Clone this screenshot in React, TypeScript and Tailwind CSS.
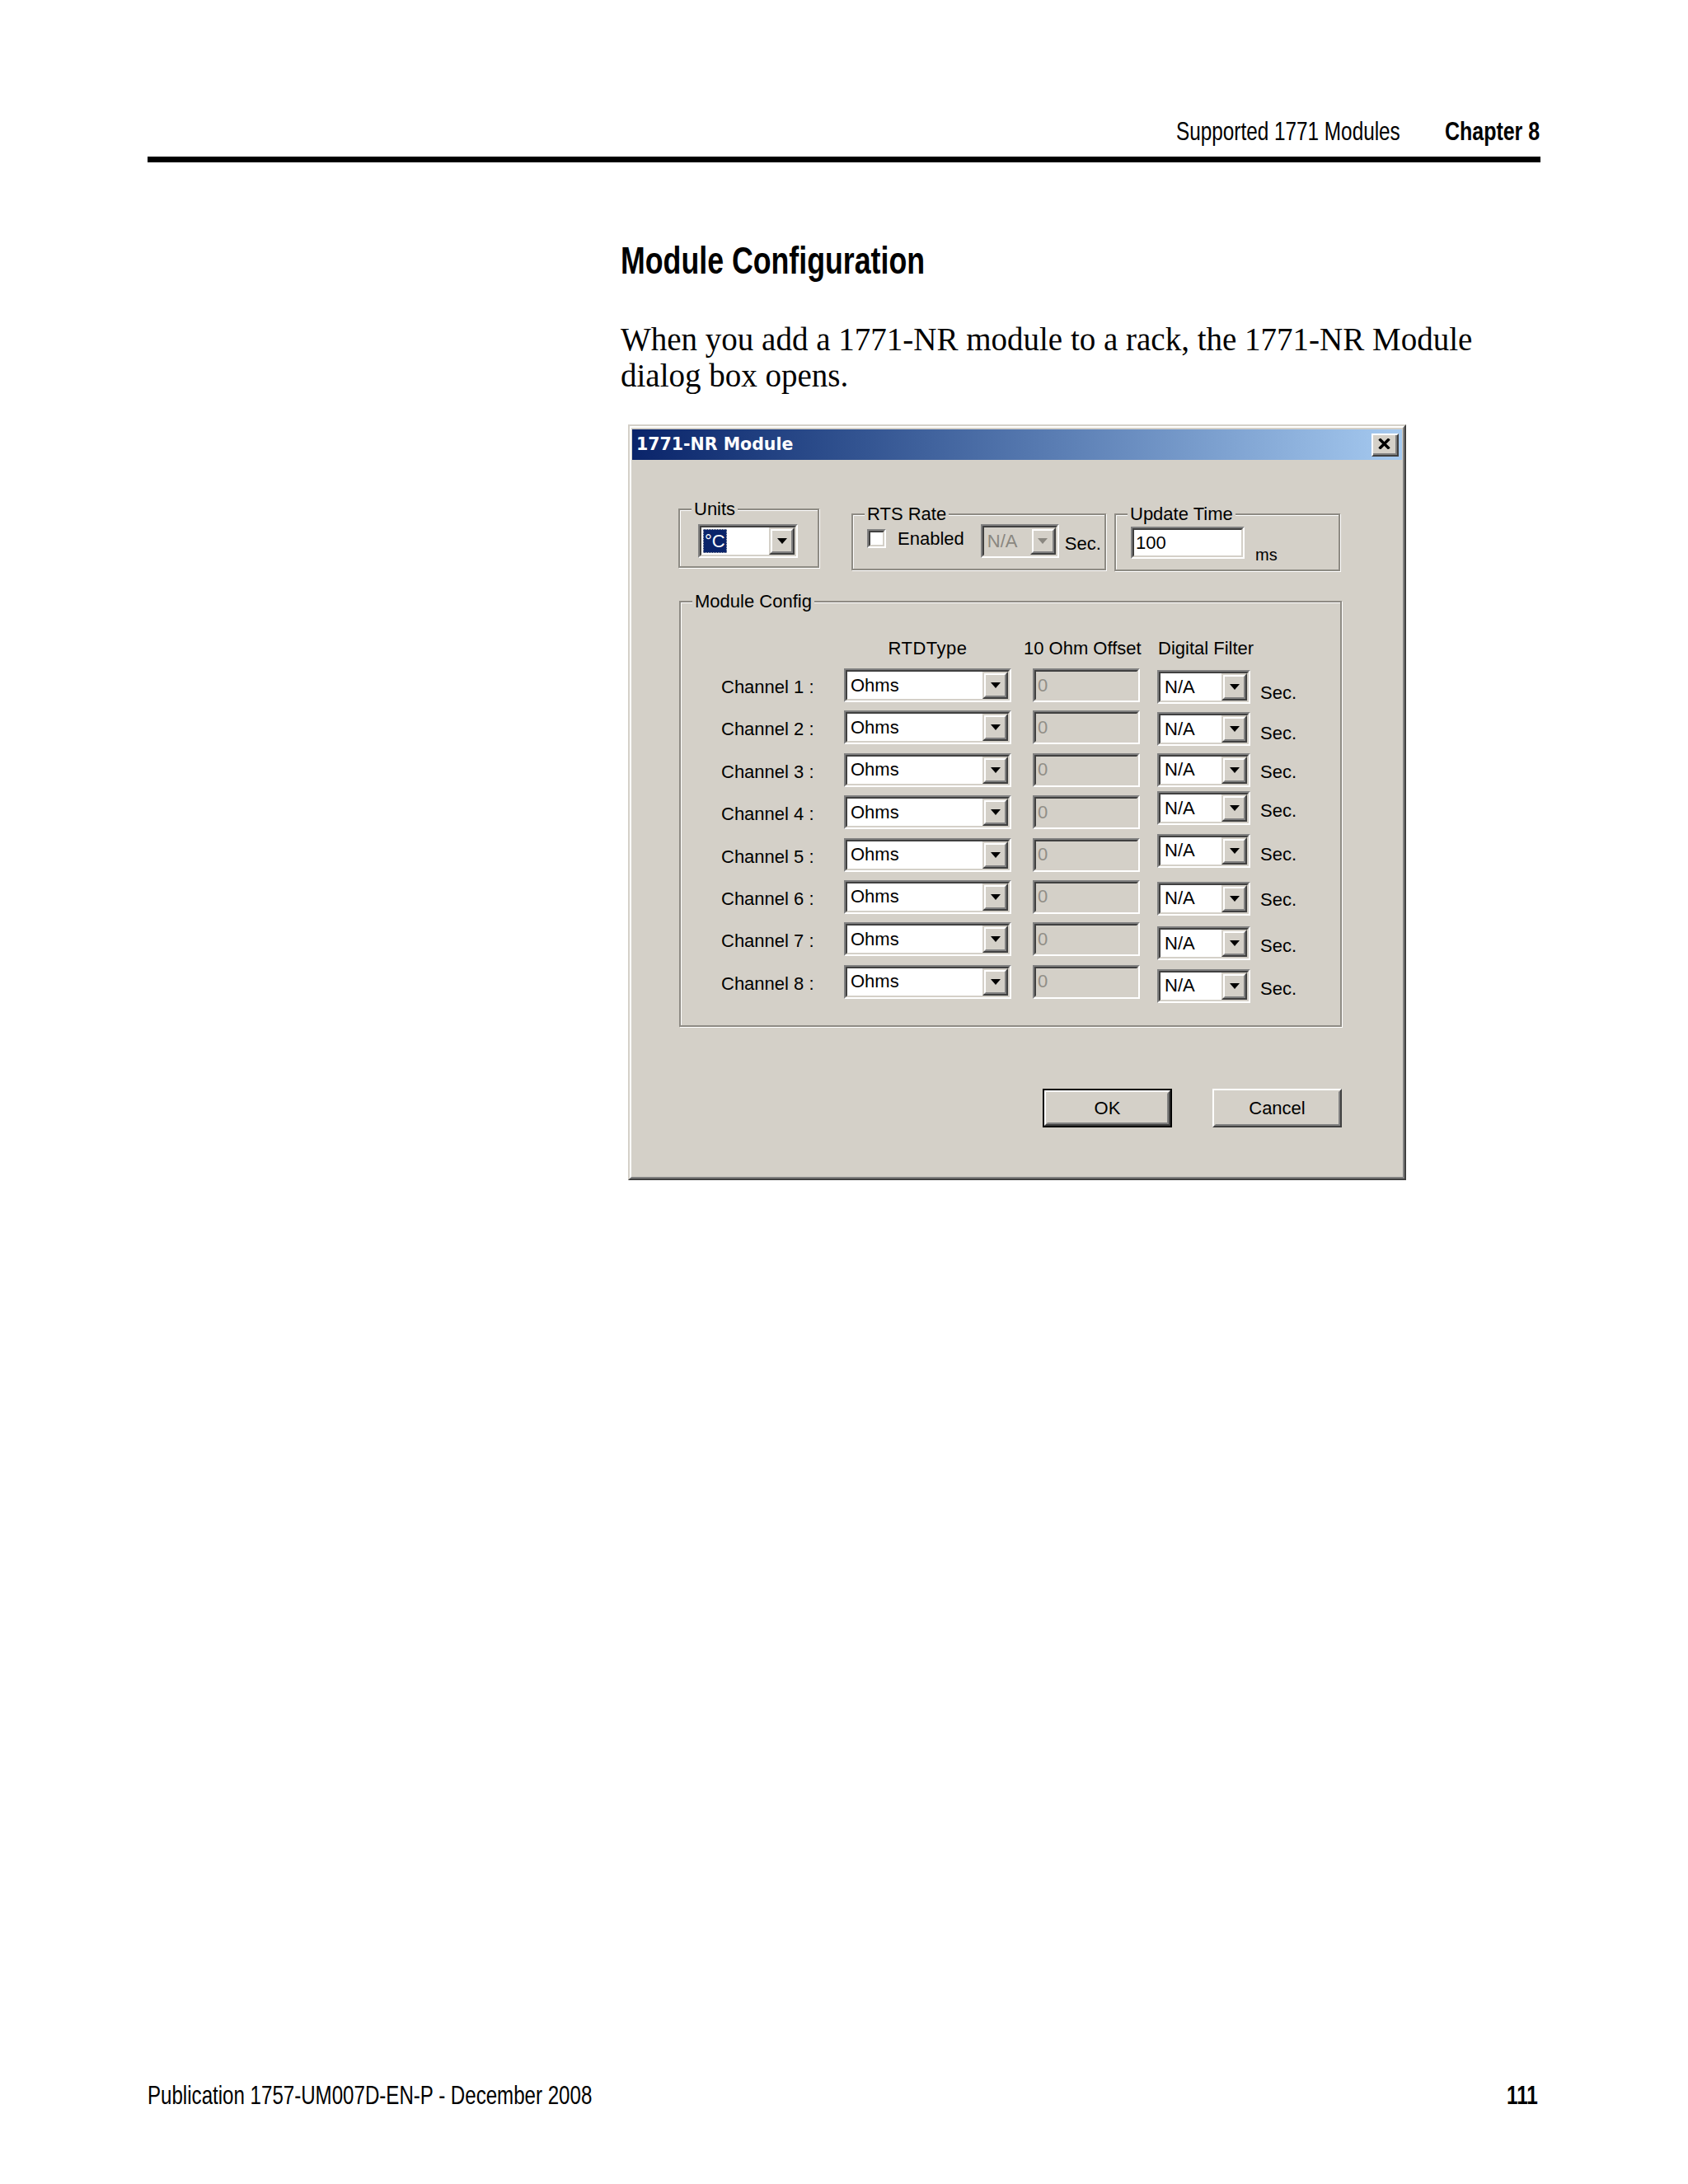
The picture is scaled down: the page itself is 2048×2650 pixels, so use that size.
import clsx from "clsx";
import type { ReactNode } from "react";

// no condensed family installed: Arial metrics squeezed to Helvetica Condensed width
const cond = "font-['Liberation_Sans',Arial,sans-serif]";

// per-row nudges, the original screenshot is not perfectly regular
const FILTER_MT = ["mt-[2px]", "mt-[2px]", "mt-0", "-mt-[5px]", "-mt-[5px]", "mt-[2px]", "mt-[5px]", "mt-[5px]"];
const SEC_MT = ["mt-[17px]", "mt-[15px]", "mt-[10px]", "mt-[6px]", "mt-[7px]", "mt-[11px]", "mt-[16px]", "mt-[16px]"];

function Squeezed({ width, className, squeeze = "scale-x-[0.76]", children }: {
  width: string; className?: string; squeeze?: string; children: ReactNode;
}) {
  return (
    <div className={clsx(width, className)}>
      <span className={clsx("inline-block origin-left whitespace-nowrap", squeeze)}>{children}</span>
    </div>
  );
}

function Sunken({ className, inner, children }: { className?: string; inner?: string; children?: ReactNode }) {
  return (
    <div className={clsx("flex border-2 border-t-[#808080] border-l-[#808080] border-b-white border-r-white", className)}>
      <div className={clsx("flex flex-1 min-w-0 border-2 border-t-[#404040] border-l-[#404040] border-b-[#d4d0c8] border-r-[#d4d0c8]", inner)}>
        {children}
      </div>
    </div>
  );
}

function Arrow({ disabled }: { disabled?: boolean }) {
  return (
    <svg width="12" height="7" viewBox="0 0 12 7">
      <polygon points="0,0 12,0 6,7" fill={disabled ? "#8a8780" : "#000"} />
    </svg>
  );
}

function DropButton({ disabled }: { disabled?: boolean }) {
  return (
    <div className="w-[31px] h-full border-2 border-t-[#d4d0c8] border-l-[#d4d0c8] border-b-[#404040] border-r-[#404040]">
      <div className="h-full flex items-center justify-center bg-[#d4d0c8] border-2 border-t-white border-l-white border-b-[#808080] border-r-[#808080]">
        <Arrow disabled={disabled} />
      </div>
    </div>
  );
}

function Combo({ width, value, disabled, className, textPad = "pl-[4px]" }: {
  width: string; value: ReactNode; disabled?: boolean; className?: string; textPad?: string;
}) {
  return (
    <Sunken className={clsx(width, "h-[41px]", className)} inner={disabled ? "bg-[#d4d0c8]" : "bg-white"}>
      <div className={clsx("flex-1 flex items-center leading-[26px]", textPad, disabled && "text-[#8a8780]")}>{value}</div>
      <DropButton disabled={disabled} />
    </Sunken>
  );
}

function GroupBox({ label, className, children }: { label: string; className?: string; children?: ReactNode }) {
  return (
    <div className={clsx("relative border-2 border-[#8e8b84] shadow-[inset_1px_1px_0_#fff,1px_1px_0_#fff]", className)}>
      <span className="absolute left-[14px] -top-[14px] px-[3px] bg-[#d4d0c8] leading-[26px] whitespace-nowrap">{label}</span>
      {children}
    </div>
  );
}

function Button({ label, isDefault }: { label: string; isDefault?: boolean }) {
  return (
    <div className={clsx("w-[157px] h-[47px]", isDefault && "border-2 border-black")}>
      <div className="h-full border-2 border-t-white border-l-white border-b-[#404040] border-r-[#404040]">
        <div className="h-full flex items-center justify-center border-2 border-t-[#d4d0c8] border-l-[#d4d0c8] border-b-[#808080] border-r-[#808080]">
          {label}
        </div>
      </div>
    </div>
  );
}

function NrDialog() {
  return (
    <div className="mt-[37px] ml-[9px] w-[944px] h-[917px] bg-[#d4d0c8] border-2 border-t-[#d4d0c8] border-l-[#d4d0c8] border-b-[#404040] border-r-[#404040]">
      <div className="h-full flex flex-col px-[1px] pt-[2px] border-2 border-t-white border-l-white border-b-[#808080] border-r-[#808080] font-['Liberation_Sans',Arial,sans-serif] text-[22px] text-black">
        {/* title bar */}
        <div className="h-[37px] flex items-center justify-between bg-linear-to-r from-[#0a246a] to-[#a6caf0] pl-[5px] pr-[4px]">
          <span className="font-['DejaVu_Sans',sans-serif] font-bold text-[20.5px] text-white leading-none">1771-NR Module</span>
          <div className="w-[33px] h-[28px] border-2 border-t-white border-l-white border-b-[#404040] border-r-[#404040] bg-[#d4d0c8]">
            <div className="h-full flex items-center justify-center border-b-2 border-r-2 border-b-[#808080] border-r-[#808080]">
              <svg width="15" height="13" viewBox="0 0 15 13">
                <path d="M1.5 0.5 L13.5 12.5 M13.5 0.5 L1.5 12.5" stroke="#000" strokeWidth="3.4" />
              </svg>
            </div>
          </div>
        </div>

        {/* body */}
        <div className="flex-1 flex flex-col">
          <div className="mt-[59px] pl-[56px] h-[76px] flex items-start">
            <GroupBox label="Units" className="w-[171px] h-[72px]">
              <div className="pl-[22px] pt-[17px]">
                <Combo
                  width="w-[121px]"
                  textPad="pl-[2px]"
                  value={<span className="h-[29px] px-[2px] flex items-center bg-[#0a246a] text-white outline-1 outline-dotted outline-[#d4d0c8] -outline-offset-1">°C</span>}
                />
              </div>
            </GroupBox>

            <GroupBox label="RTS Rate" className="ml-[39px] mt-[6px] w-[309px] h-[69px]">
              <div className="pl-[17px] pt-[11px] flex items-start">
                <Sunken className="mt-[6px] w-[23px] h-[23px]" inner="bg-white" />
                <span className="ml-[14px] mt-[5px] leading-[26px]">Enabled</span>
                <Combo width="w-[95px]" className="ml-[20px]" value="N/A" disabled />
                <span className="ml-[7px] mt-[11px] leading-[26px]">Sec.</span>
              </div>
            </GroupBox>

            <GroupBox label="Update Time" className="ml-[10px] mt-[6px] w-[274px] h-[70px]">
              <div className="pl-[18px] pt-[14px] flex items-start">
                <Sunken className="w-[138px] h-[39px]" inner="bg-white items-center pl-[2px] leading-[26px]">100</Sunken>
                <span className="ml-[13px] mt-[21px] text-[20px] leading-[26px]">ms</span>
              </div>
            </GroupBox>
          </div>

          <GroupBox label="Module Config" className="ml-[57px] mt-[36px] w-[804px] h-[517px]">
            <div className="pt-[43px] pl-[49px]">
              <div className="flex h-[26px] leading-[26px] whitespace-nowrap">
                <div className="w-[149px]" />
                <div className="w-[203px] text-center tracking-[0.5px]">RTDType</div>
                <div className="ml-[15px] w-[141px]">10 Ohm Offset</div>
                <div className="ml-[22px]">Digital Filter</div>
              </div>
              <div className="mt-[11px] flex flex-col gap-[10.4px]">
                {[1, 2, 3, 4, 5, 6, 7, 8].map((n, i) => (
                  <div key={n} className="flex items-start h-[41px]">
                    <div className="w-[149px] mt-[10px] leading-[26px]">Channel {n} :</div>
                    <Combo width="w-[203px]" value="Ohms" />
                    <Sunken className="ml-[26px] w-[130px] h-[41px]" inner="bg-[#d4d0c8] items-center pl-[2px] leading-[26px] text-[#918e87]">0</Sunken>
                    <Combo width="w-[113px]" className={clsx("ml-[21px]", FILTER_MT[i])} textPad="pl-[5px]" value="N/A" />
                    <span className={clsx("ml-[12px] leading-[26px]", SEC_MT[i])}>Sec.</span>
                  </div>
                ))}
              </div>
            </div>
          </GroupBox>

          <div className="mt-[75px] flex justify-end gap-[49px] pr-[73px]">
            <Button label="OK" isDefault />
            <Button label="Cancel" />
          </div>
        </div>
      </div>
    </div>
  );
}

export default function App() {
  return (
    <div className="w-[2048px] h-[2650px] bg-white text-black flex flex-col">
      <header className={clsx("pt-[141px] px-[179px]", cond)}>
        <div className="flex justify-end gap-[54px] text-[32px] leading-[36px]">
          <Squeezed width="w-[272px]">Supported 1771 Modules</Squeezed>
          <Squeezed width="w-[116px]" className="font-bold" squeeze="scale-x-[0.78]">Chapter 8</Squeezed>
        </div>
        <div className="mt-[13px] h-[7px] bg-black" />
      </header>

      <main className="flex-1 pl-[753px] pr-[179px]">
        <h1 className={clsx("mt-[93px] text-[47px] leading-[52px] font-bold", cond)}>
          <Squeezed width="w-[371px]">Module Configuration</Squeezed>
        </h1>
        <p className="mt-[48px] font-['Liberation_Serif',serif] text-[39px] leading-[44px]">
          When you add a 1771-NR module to a rack, the 1771-NR Module dialog box opens.
        </p>
        <NrDialog />
      </main>

      <footer className={clsx("flex justify-between px-[179px] pb-[90px] text-[32px] leading-[36px]", cond)}>
        <Squeezed width="w-[540px]" squeeze="scale-x-[0.753]">Publication 1757-UM007D-EN-P - December 2008</Squeezed>
        <Squeezed width="w-[41px]" className="font-bold">111</Squeezed>
      </footer>
    </div>
  );
}
